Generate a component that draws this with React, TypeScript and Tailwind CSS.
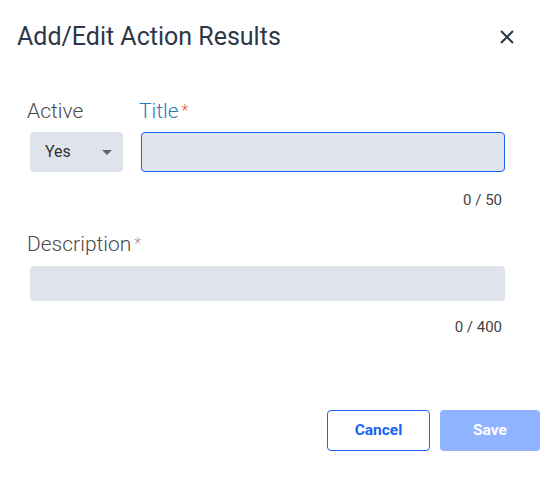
import React from 'react';

export default function App() {
  return (
    <div className="w-[548px] h-[485px] bg-white font-['Roboto',sans-serif] relative">
      {/* Header */}
      <div className="flex items-center justify-between pl-[17px] pr-[33px] pt-[20px] h-[54px]">
        <h2 className="text-[25px] leading-[28px] text-[#2d3748]">Add/Edit Action Results</h2>
        <button className="w-[16px] h-[16px] flex items-center justify-center text-[#2d3748]">
          <svg width="14" height="14" viewBox="0 0 14 14" fill="none" stroke="currentColor" strokeWidth="2">
            <path d="M1 1L13 13M13 1L1 13" />
          </svg>
        </button>
      </div>

      {/* Form */}
      <div className="pl-[27px] pr-[43px] pt-[44px]">
        <div className="flex gap-[16px]">
          <div className="flex flex-col w-[96px]">
            <label className="text-[21px] leading-[26px] font-light text-[#4a4a4a] mb-[8px]">Active</label>
            <div className="ml-[3px] h-[40px] w-[93px] bg-[#dfe3ec] rounded-[4px] flex items-center justify-between pl-[15px] pr-[11px]">
              <span className="text-[16px] text-[#333]">Yes</span>
              <svg width="10" height="5" viewBox="0 0 10 5"><path d="M0 0H10L5 5Z" fill="#666" /></svg>
            </div>
          </div>
          <div className="flex flex-col flex-1">
            <label className="text-[21px] leading-[26px] font-light text-[#2f7ab8] mb-[8px]">
              Title<span className="text-[#e8553e] text-[16px] align-top ml-[3px]">*</span>
            </label>
            <div className="ml-[2px] h-[40px] bg-[#dfe3ec] border border-[#1a62f5] rounded-[4px]" />
          </div>
        </div>
        <div className="text-right text-[15px] text-[#444] mt-[19px] mr-[3px] leading-[18px]">0 / 50</div>

        <div className="mt-[22px]">
          <label className="block text-[21px] leading-[26px] font-light text-[#4a4a4a] mb-[9px]">
            Description<span className="text-[#999] text-[16px] align-top ml-[3px]">*</span>
          </label>
          <div className="ml-[3px] h-[35px] bg-[#dfe3ec] rounded-[4px]" />
        </div>
        <div className="text-right text-[15px] text-[#444] mt-[17px] mr-[3px] leading-[18px]">0 / 400</div>
      </div>

      {/* Footer */}
      <div className="flex justify-end gap-[10px] pr-[8px] mt-[74px]">
        <button className="w-[103px] h-[41px] border border-[#1a62f5] rounded-[4px] text-[#1a62f5] font-bold text-[15.5px]">Cancel</button>
        <button className="w-[100px] h-[41px] bg-[#8fb3ff] rounded-[4px] text-white font-bold text-[15.5px]">Save</button>
      </div>
    </div>
  );
}
